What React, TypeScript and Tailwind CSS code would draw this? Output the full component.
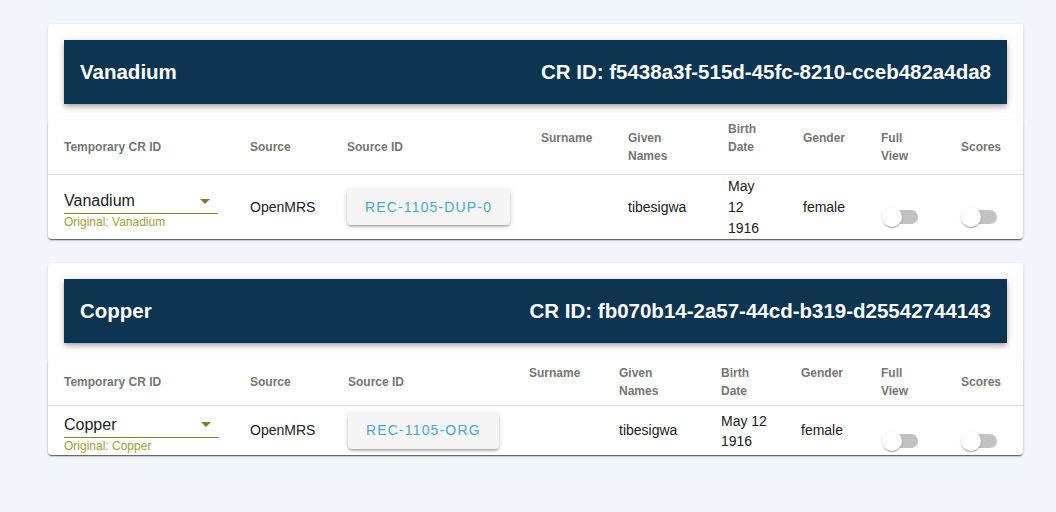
import React from "react";

type CardData = {
  name: string;
  crid: string;
  grid: string;
  headH: string;
  bodyH: string;
  sourceId: string;
  selectW: string;
  head: string[][];
  birth: string[];
  birthLeading: string;
};

const cards: CardData[] = [
  {
    name: "Vanadium",
    crid: "CR ID: f5438a3f-515d-45fc-8210-cceb482a4da8",
    grid: "grid-cols-[186px_97px_194px_87px_100px_75px_78px_80px_1fr]",
    headH: "h-[55px]",
    bodyH: "h-[64px]",
    sourceId: "REC-1105-DUP-0",
    selectW: "w-[154px]",
    head: [
      ["Temporary CR ID"],
      ["Source"],
      ["Source ID"],
      ["Surname", ""],
      ["Given", "Names"],
      ["Birth", "Date", ""],
      ["Gender", ""],
      ["Full", "View"],
      ["Scores"],
    ],
    birth: ["May", "12", "1916"],
    birthLeading: "leading-[21px]",
  },
  {
    name: "Copper",
    crid: "CR ID: fb070b14-2a57-44cd-b319-d25542744143",
    grid: "grid-cols-[186px_98px_181px_90px_102px_80px_80px_80px_1fr]",
    headH: "h-[47px]",
    bodyH: "h-[49px]",
    sourceId: "REC-1105-ORG",
    selectW: "w-[155px]",
    head: [
      ["Temporary CR ID"],
      ["Source"],
      ["Source ID"],
      ["Surname", ""],
      ["Given", "Names"],
      ["Birth", "Date"],
      ["Gender", ""],
      ["Full", "View"],
      ["Scores"],
    ],
    birth: ["May 12", "1916"],
    birthLeading: "leading-[20px]",
  },
];

function Toggle() {
  return (
    <div className="pt-[20px]">
      <div className="relative w-[40px] h-[20px]">
        <div className="absolute left-[3px] top-[3px] w-[34px] h-[14px] rounded-full bg-[#c2c2c2]" />
        <div className="absolute left-[1px] top-0 w-[20px] h-[20px] rounded-full bg-white shadow-[0_2px_1px_-1px_rgba(0,0,0,0.2),0_1px_1px_0_rgba(0,0,0,0.14),0_1px_3px_0_rgba(0,0,0,0.12)]" />
      </div>
    </div>
  );
}

function Card({ c }: { c: CardData }) {
  return (
    <div className="w-[975px] bg-white rounded-[4px] shadow-[0_2px_1px_-1px_rgba(0,0,0,0.2),0_1px_1px_0_rgba(0,0,0,0.14),0_1px_3px_0_rgba(0,0,0,0.12)] px-4 pt-4">
      <div className="h-[64px] bg-[#0d3451] flex items-center justify-between px-4 text-white font-bold text-[20.5px] shadow-[0_2px_4px_-1px_rgba(0,0,0,0.2),0_4px_5px_0_rgba(0,0,0,0.14),0_1px_10px_0_rgba(0,0,0,0.12)]">
        <span>{c.name}</span>
        <span>{c.crid}</span>
      </div>
      <div className="-mx-4 mt-4 bg-white rounded-[4px] shadow-[0_2px_1px_-1px_rgba(0,0,0,0.2),0_1px_1px_0_rgba(0,0,0,0.14),0_1px_3px_0_rgba(0,0,0,0.12)]">
        <div className={`grid ${c.grid} pl-4 ${c.headH} border-b border-[#e0e0e0]`}>
          {c.head.map((lines, i) => (
            <div key={i} className="flex flex-col justify-center text-[12px] leading-[18px] font-bold text-[#757575]">
              {lines.map((l, j) => (
                <div key={j}>{l === "" ? "\u00a0" : l}</div>
              ))}
            </div>
          ))}
        </div>
        <div className={`grid ${c.grid} pl-4 ${c.bodyH} text-[14px] text-[#212121]`}>
          <div className="flex items-center">
            <div className={`${c.selectW} h-[48px] flex flex-col`}>
              <div className="pt-[8px] pb-[3px] border-b border-[#878729] flex items-center justify-between">
                <span className="text-[16px] leading-[19px]">{c.name}</span>
                <svg width="10" height="5" viewBox="0 0 10 5" className="mr-[8px] mt-[1px]">
                  <path d="M0 0 L10 0 L5 5 Z" fill="#7f7d25" />
                </svg>
              </div>
              <div className="mt-[1px] text-[12px] leading-[14px] text-[#a19d33]">
                Original: {c.name}
              </div>
            </div>
          </div>
          <div className="flex items-center">OpenMRS</div>
          <div className="flex items-center">
            <div className="h-[36px] px-[18px] flex items-center rounded-[4px] bg-[#f5f5f5] text-[#4fa3dc] tracking-[1.15px] shadow-[0_1px_5px_0_rgba(0,0,0,0.2),0_2px_2px_0_rgba(0,0,0,0.14),0_3px_1px_-2px_rgba(0,0,0,0.12)]">
              {c.sourceId}
            </div>
          </div>
          <div />
          <div className="flex items-center">tibesigwa</div>
          <div className={`flex flex-col justify-center ${c.birthLeading}`}>
            {c.birth.map((b, i) => (
              <div key={i}>{b}</div>
            ))}
          </div>
          <div className="flex items-center">female</div>
          <div className="flex items-center">
            <Toggle />
          </div>
          <div className="flex items-center -ml-[1px]">
            <Toggle />
          </div>
        </div>
      </div>
    </div>
  );
}

export default function App() {
  return (
    <div
      className="min-h-screen bg-[#f3f6f9] pt-6 pl-12 flex flex-col gap-6"
      style={{ fontFamily: '"Liberation Sans", Arial, sans-serif' }}
    >
      {cards.map((c) => (
        <Card key={c.name} c={c} />
      ))}
    </div>
  );
}
